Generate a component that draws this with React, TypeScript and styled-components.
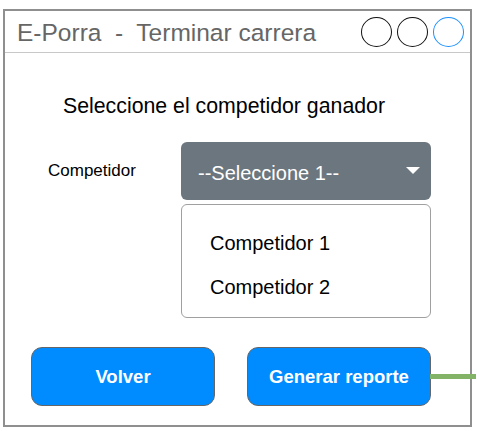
import React from "react";
import styled, { createGlobalStyle } from "styled-components";

const Global = createGlobalStyle`
  html, body { margin: 0; padding: 0; background: #ffffff; overflow: hidden; }
  body { font-family: "Liberation Sans", Arial, Helvetica, sans-serif; }
  * { box-sizing: border-box; }
`;

const Window = styled.div`
  margin: 9px 0 0 3px;
  width: 469px;
  height: 418px;
  border: 2px solid #8f8f8f;
  display: flex;
  flex-direction: column;
  background: #fff;
`;

const Header = styled.div`
  height: 42px;
  border-bottom: 1px solid #c8c8c8;
  display: flex;
  align-items: center;
  justify-content: space-between;
  padding: 0 6px 0 12px;
`;

const Title = styled.div`
  font-size: 24.5px;
  line-height: 28px;
  color: #666666;
  white-space: pre;
  padding-top: 3px;
`;

const Controls = styled.div`
  display: flex;
  gap: 5px;
  align-items: center;
`;

const Circle = styled.div<{ $blue?: boolean }>`
  width: 31px;
  height: 30px;
  border-radius: 50%;
  border: 1.5px solid ${(p) => (p.$blue ? "#1e90ff" : "#111111")};
`;

const Body = styled.div`
  flex: 1;
  display: flex;
  flex-direction: column;
`;

const Heading = styled.div`
  margin-top: 41px;
  padding-left: 58px;
  font-size: 21.3px;
  line-height: 24px;
  color: #000;
`;

const FormRow = styled.div`
  margin-top: 24px;
  display: flex;
  align-items: center;
  padding-left: 43px;
`;

const Label = styled.div`
  width: 133px;
  font-size: 17px;
  line-height: 20px;
  color: #000;
`;

const Select = styled.div`
  width: 250px;
  height: 58px;
  border-radius: 6px;
  background: #6c767e;
  display: flex;
  align-items: center;
  justify-content: space-between;
  padding: 3px 11px 0 17px;
  color: #fff;
  font-size: 20px;
  line-height: 24px;
`;

const Caret = styled.svg`
  display: block;
  margin-top: -4px;
`;

const OptionList = styled.div`
  margin: 4px 0 0 176px;
  width: 250px;
  height: 114px;
  border: 1px solid #a0a0a0;
  border-radius: 6px;
  padding: 16px 0 8px 28px;
  display: flex;
  flex-direction: column;
`;

const OptionItem = styled.div`
  font-size: 20px;
  line-height: 44px;
  color: #000;
`;

const Buttons = styled.div`
  margin-top: 29px;
  display: flex;
  gap: 32px;
  padding-left: 26px;
`;

const Button = styled.div<{ $linked?: boolean }>`
  position: relative;
  width: 184px;
  height: 59px;
  border-radius: 11px;
  border: 1px solid #666666;
  background: #008cff;
  color: #fff;
  font-weight: bold;
  font-size: 18.5px;
  display: flex;
  align-items: center;
  justify-content: center;
  ${(p) =>
    p.$linked
      ? `&::after {
    content: "";
    position: absolute;
    left: 100%;
    top: 26px;
    width: 46px;
    height: 5px;
    background: #82b366;
  }`
      : ""}
`;

export default function App() {
  return (
    <>
      <Global />
      <Window>
        <Header>
          <Title>{"E-Porra  -  Terminar carrera"}</Title>
          <Controls>
            <Circle />
            <Circle />
            <Circle $blue />
          </Controls>
        </Header>
        <Body>
          <Heading>Seleccione el competidor ganador</Heading>
          <FormRow>
            <Label>Competidor</Label>
            <Select>
              <span>--Seleccione 1--</span>
              <Caret width="14" height="7" viewBox="0 0 14 7">
                <polygon points="0,0 14,0 7,7" fill="#ffffff" />
              </Caret>
            </Select>
          </FormRow>
          <OptionList>
            <OptionItem>Competidor 1</OptionItem>
            <OptionItem>Competidor 2</OptionItem>
          </OptionList>
          <Buttons>
            <Button>Volver</Button>
            <Button $linked>Generar reporte</Button>
          </Buttons>
        </Body>
      </Window>
    </>
  );
}
